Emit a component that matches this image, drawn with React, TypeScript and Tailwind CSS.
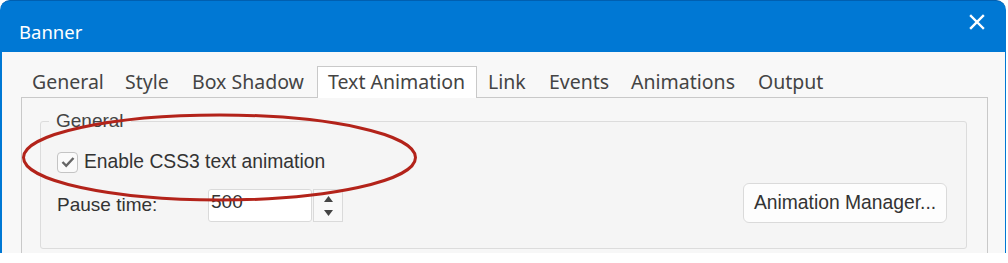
import React from 'react';

const TABS = [
  { label: 'General', w: 'w-[93px]' },
  { label: 'Style', w: 'w-[67px]' },
  { label: 'Box Shadow', w: 'w-[136px]' },
  { label: 'Text Animation', w: 'w-[160px]', active: true },
  { label: 'Link', w: 'w-[61px]' },
  { label: 'Events', w: 'w-[82px]' },
  { label: 'Animations', w: 'w-[127px]' },
  { label: 'Output', w: 'w-[100px]' },
];

const uiFont = { fontFamily: '"Segoe UI", "Noto Sans", "Open Sans", sans-serif' };
const formFont = { fontFamily: '"Liberation Sans", Arial, sans-serif' };

export default function App() {
  return (
    <div className="relative w-[1008px] h-[263px] bg-white overflow-hidden">
      <div className="w-[1006px] h-[253px] flex flex-col rounded-t-[10px] overflow-hidden border-t border-[#005fb0] bg-[#0078d4]">
        {/* Title bar */}
        <div className="h-[51px] shrink-0 flex items-center justify-between pl-[19px] pr-[21px]" style={uiFont}>
          <span className="text-white text-[18.5px] leading-[24px] pt-[10px]">Banner</span>
          <svg width="16" height="16" viewBox="0 0 16 16" className="mt-[-10px]">
            <path d="M2 2 L14 14 M14 2 L2 14" stroke="white" strokeWidth="2.4" strokeLinecap="square" />
          </svg>
        </div>

        {/* Body */}
        <div className="flex-1 ml-[2px] mr-[1px] bg-[#f8f8f8] pl-[19px] pr-[17px] pt-[14px] flex flex-col">
          <div className="flex items-end h-[31px]" style={uiFont}>
            {TABS.map((t) => (
              <div
                key={t.label}
                className={`${t.w} h-[31px] pl-[10px] pt-[3px] border-t border-x text-[19.5px] leading-[23px] text-[#444] whitespace-nowrap ${
                  t.active ? 'border-[#c9c9c9] bg-white relative z-10 h-[32px] -mb-px' : 'border-transparent'
                }`}
              >
                {t.label}
              </div>
            ))}
          </div>

          {/* Tab panel */}
          <div className="flex-1 border-t border-x border-[#c9c9c9] bg-[#f7f7f7] pl-[18px] pr-[20px] pt-[12px]" style={formFont}>
            <fieldset className="border border-[#dcdcdc] rounded-[3px] pl-[16px] pr-[19px] pb-[25px] bg-[#f5f5f5]">
              <legend className="-ml-[8px] px-[7px] text-[19px] leading-[22px] text-[#444]">General</legend>

              <div className="flex items-center mt-[19px]">
                <div className="w-[21px] h-[21px] rounded-[4px] border border-[#c4c4c4] bg-[#fafafa] flex items-center justify-center">
                  <svg width="14" height="12" viewBox="0 0 14 12">
                    <path d="M1.5 6 L5.2 9.8 L12.5 2" fill="none" stroke="#666" strokeWidth="2.4" />
                  </svg>
                </div>
                <span className="ml-[6px] text-[19.3px] leading-[22px] text-[#333]">Enable CSS3 text animation</span>
              </div>

              <div className="flex items-start mt-[10px]">
                <span className="w-[151px] mt-[11px] text-[19px] leading-[22px] text-[#333]">Pause time:</span>
                <div className="mt-[6px] w-[104px] h-[33px] rounded-[3px] border border-[#dadada] bg-white pl-[2px] pt-[1px] text-[19px] leading-[22px] text-[#333]">
                  500
                </div>
                <div className="mt-[6px] ml-[1px] w-[30px] h-[33px] border border-[#dadada] bg-[#f8f8f8] flex flex-col items-center justify-center gap-[8px]">
                  <svg width="9" height="6" viewBox="0 0 9 6"><path d="M4.5 0 L9 6 L0 6 Z" fill="#444" /></svg>
                  <svg width="9" height="6" viewBox="0 0 9 6"><path d="M0 0 L9 0 L4.5 6 Z" fill="#444" /></svg>
                </div>
                <button className="ml-auto w-[204px] h-[40px] rounded-[6px] border border-[#dadada] bg-[#fdfdfd] text-[19.3px] leading-[22px] text-[#333]">
                  Animation Manager...
                </button>
              </div>
            </fieldset>
          </div>
        </div>
      </div>

      {/* Annotation ellipse */}
      <svg className="absolute left-0 top-0 pointer-events-none" width="1008" height="263">
        <ellipse cx="219.5" cy="157.5" rx="196" ry="42.5" fill="none" stroke="#b3231a" strokeWidth="3" />
      </svg>
    </div>
  );
}
